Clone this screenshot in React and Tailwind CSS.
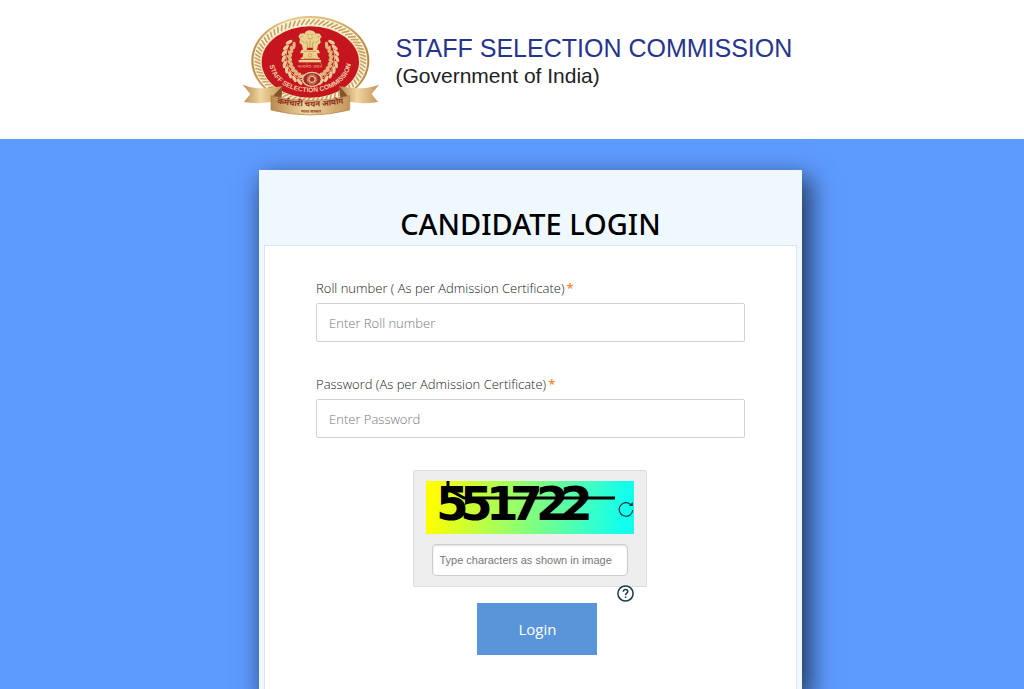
import { useState } from "react";

const CAPTCHA_CODE = "551722";

const range = (count) => Array.from({ length: count }, (_, i) => i);

function Laurel() {
	return (
		<g>
			<path d="M207 219 C160 205 138 165 157 112" fill="none" stroke="#e3c08a" strokeWidth="3" />
			{range(9).map((i) => {
				const angle = 110 + i * 13;
				const rad = (angle * Math.PI) / 180;
				const x = 222 + 70 * Math.cos(rad);
				const y = 150 + 69 * Math.sin(rad);
				return (
					<g key={i} transform={`translate(${x} ${y}) rotate(${angle + 90})`}>
						<ellipse cx="0" cy="-10" rx="11" ry="5" fill="#eacb98" transform="rotate(28)" />
						<ellipse cx="0" cy="10" rx="11" ry="5" fill="#dfb67b" transform="rotate(-28)" />
					</g>
				);
			})}
		</g>
	);
}

function Emblem() {
	return (
		<svg className="h-[115px] w-[150px] shrink-0" viewBox="0 0 450 345" role="img" aria-label="Staff Selection Commission emblem">
			<defs>
				<linearGradient id="gold" x1="0" x2="1">
					<stop offset="0" stopColor="#b98a45" />
					<stop offset=".3" stopColor="#e9cd8c" />
					<stop offset=".7" stopColor="#dbb76e" />
					<stop offset="1" stopColor="#b78339" />
				</linearGradient>
				<linearGradient id="ribbon" x1="0" x2="1">
					<stop offset="0" stopColor="#b88a50" />
					<stop offset=".45" stopColor="#f0d6a0" />
					<stop offset="1" stopColor="#c4965a" />
				</linearGradient>
				<path id="nameArc" d="M100 165 C112 282 332 282 346 162" />
				<path id="ribbonArc" d="M116 284 Q222 308 330 284" />
				<path id="mottoArc" d="M150 309 Q222 320 300 309" />
			</defs>
			<ellipse cx="223" cy="158" rx="177" ry="134" fill="url(#gold)" />
			<ellipse cx="223" cy="158" rx="171" ry="128" fill="#faf3df" />
			<g stroke="#c9a25c" strokeWidth="5" strokeLinecap="round">
				{range(72).map((i) => {
					const a = (i * 5 * Math.PI) / 180;
					const b = a + 0.07;
					return (
						<line
							key={i}
							x1={223 + 150 * Math.cos(a)}
							y1={158 + 110 * Math.sin(a)}
							x2={223 + 166 * Math.cos(b)}
							y2={158 + 123 * Math.sin(b)}
						/>
					);
				})}
			</g>
			<ellipse cx="223" cy="161" rx="150" ry="109" fill="#f4e4b9" />
			<ellipse cx="223" cy="162" rx="146" ry="107" fill="#c5161f" />
			<Laurel />
			<g transform="translate(446 0) scale(-1 1)">
				<Laurel />
			</g>
			<g fill="#ecd08e">
				<path d="M204 80 Q208 67 222 67 Q237 68 240 80 L243 91 L239 101 L237 119 H207 L205 101 L201 90 Z" />
				<path d="M204 76 L192 77 L187 86 L192 93 L190 104 L198 111 L201 127 L213 127 L211 89 Z" />
				<path d="M240 76 L251 77 L257 86 L252 93 L254 104 L246 111 L243 127 L231 127 L233 89 Z" />
				<path d="M196 126 H248 L252 136 H243 L247 149 H251 V154 H194 V149 H199 L202 136 H192 Z" />
				<path d="M188 156 H255 V163 H188 Z" />
			</g>
			<g fill="none" stroke="#b98d45" strokeWidth="2">
				<path d="M213 79 Q218 84 219 78 M225 78 Q227 84 232 79 M214 89 Q222 98 231 89 M210 99 L215 109 L213 123 M234 99 L229 109 L231 123 M222 97 V119 M193 86 H200 M244 86 H251 M197 98 L206 105 M247 98 L239 105" />
				<circle cx="222" cy="142" r="5" />
				<path d="M204 130 H241 M204 151 H241" />
			</g>
			<text x="222" y="181" textAnchor="middle" fontSize="15" fill="#e6a070" fontFamily="Noto Sans, sans-serif">सत्यमेव जयते</text>
			<ellipse cx="228" cy="214" rx="31" ry="23" fill="#e8c894" />
			<ellipse cx="228" cy="214" rx="26" ry="19" fill="#9f2a25" />
			<g stroke="#dcb27e" strokeWidth="2">
				{range(12).map((i) => (
					<line key={i} x1="228" y1="198" x2="228" y2="230" transform={`rotate(${i * 15} 228 214)`} />
				))}
			</g>
			<circle cx="228" cy="214" r="9" fill="#a83428" stroke="#e8c894" strokeWidth="3" />
			<text fontSize="20" fontWeight="700" fill="#f0cfa8" fontFamily="Liberation Sans, sans-serif">
				<textPath href="#nameArc" startOffset="50%" textAnchor="middle">STAFF SELECTION COMMISSION</textPath>
			</text>
			<path d="M20 230 Q70 250 139 234 L132 277 Q80 291 24 282 L43 258 Z" fill="url(#ribbon)" />
			<path d="M429 230 Q376 250 310 234 L316 277 Q366 291 426 282 L407 258 Z" fill="url(#ribbon)" />
			<path d="M105 271 L139 234 L136 278 Z M341 271 L310 234 L313 278 Z" fill="#875428" />
			<path d="M105 263 Q222 292 341 263 V306 Q222 336 105 306 Z" fill="url(#ribbon)" stroke="#af7d42" strokeWidth="2" />
			<text fontSize="24" fontWeight="700" fill="#8d2e1a" fontFamily="Noto Sans, sans-serif">
				<textPath href="#ribbonArc" startOffset="50%" textAnchor="middle">कर्मचारी चयन आयोग</textPath>
			</text>
			<text fontSize="12" fontWeight="700" fill="#8d3a20" fontFamily="Noto Sans, sans-serif">
				<textPath href="#mottoArc" startOffset="50%" textAnchor="middle">भारत सरकार</textPath>
			</text>
		</svg>
	);
}

function CaptchaImage() {
	return (
		<svg className="block h-[53px] w-full overflow-visible" viewBox="0 0 208 53" role="img" aria-label="Captcha">
			<defs>
				<linearGradient id="captchaBg" gradientUnits="userSpaceOnUse" x1="8" y1="0" x2="198" y2="30">
					<stop offset="0" stopColor="#ffff00" />
					<stop offset="1" stopColor="#12ffee" />
				</linearGradient>
			</defs>
			<rect width="208" height="53" fill="url(#captchaBg)" />
			<text x="10 34 60 84 110 134" y="39" fontSize="47" fontWeight="700" fontFamily="DejaVu Sans, sans-serif">
				{CAPTCHA_CODE}
			</text>
			<path d="M22 0 V8 L38 17 H189" fill="none" stroke="#000" strokeWidth="3" />
		</svg>
	);
}

function Field({ id, label, type = "text", placeholder, value, onChange }) {
	return (
		<div>
			<label htmlFor={id} className="block text-[13px] leading-5 font-light text-[#222]">
				{label}
				<span className="ml-0.5 font-semibold text-[#f58634]">*</span>
			</label>
			<input
				id={id}
				type={type}
				placeholder={placeholder}
				value={value}
				onChange={(e) => onChange(e.target.value)}
				className="mt-[5px] block h-[39px] w-full rounded-xs border border-[#d2d2d2] bg-white px-3 text-[13px] font-light text-[#333] placeholder:text-[#777]"
			/>
		</div>
	);
}

export default function App() {
	const [rollNumber, setRollNumber] = useState("");
	const [password, setPassword] = useState("");
	const [captcha, setCaptcha] = useState("");

	return (
		<div className="flex min-h-screen flex-col bg-[#5e9bff] font-['Open_Sans',sans-serif]">
			<header className="flex bg-white pt-2 pb-4 pl-[23%]">
				<Emblem />
				<div className="pt-6 pl-2.5 font-['Liberation_Sans',Arial,sans-serif]">
					<p className="text-[25px] leading-8 whitespace-nowrap text-[#27348b]">STAFF SELECTION COMMISSION</p>
					<p className="text-[21px] leading-6 text-[#222]">(Government of India)</p>
				</div>
			</header>

			<main className="flex grow flex-col pt-[31px]">
				<section className="ml-[25.3%] flex w-[53%] grow flex-col bg-[#f0f8ff] px-[5px] shadow-[6px_10px_24px_2px_rgba(0,0,0,0.65)]">
					<h1 className="pt-[34px] pb-px text-center font-['Noto_Sans','Open_Sans',sans-serif] text-[29px] leading-10 font-medium text-black">
						CANDIDATE LOGIN
					</h1>
					<form className="grow border border-b-0 border-[#dde4eb] bg-white px-[51px] pt-8" onSubmit={(e) => e.preventDefault()}>
						<div className="flex flex-col gap-8">
							<Field
								id="roll"
								label="Roll number ( As per Admission Certificate)"
								placeholder="Enter Roll number"
								value={rollNumber}
								onChange={setRollNumber}
							/>
							<Field
								id="password"
								type="password"
								label="Password (As per Admission Certificate)"
								placeholder="Enter Password"
								value={password}
								onChange={setPassword}
							/>
						</div>

						<div className="relative mx-auto mt-8 w-[234px] rounded-xs border border-[#ddd] bg-[#eee] py-2.5 pr-3 pl-3">
							<CaptchaImage />
							<button type="button" aria-label="Refresh captcha" className="absolute top-[30px] right-3 text-[#12343b]">
								<svg className="size-4" viewBox="0 0 16 16" fill="none" stroke="currentColor" strokeWidth="1.2">
									<path d="M13.2 4 A6.8 6.8 0 1 0 14.8 9" />
									<path d="M14.8 1 V5 H10.8 Z" fill="currentColor" stroke="none" />
								</svg>
							</button>
							<input
								aria-label="Captcha characters"
								placeholder="Type characters as shown in image"
								value={captcha}
								onChange={(e) => setCaptcha(e.target.value)}
								className="mx-auto mt-2.5 block h-8 w-[196px] rounded-sm border border-[#ccc] bg-white px-1.5 font-['Liberation_Sans',Arial,sans-serif] text-[11px] shadow-[inset_0_1px_2px_rgba(0,0,0,0.12)] placeholder:text-[#777]"
							/>
							<button type="button" aria-label="Help" className="absolute right-3 -bottom-4 text-[#183d48]">
								<svg className="size-[17px]" viewBox="0 0 17 17" fill="none" stroke="currentColor" strokeWidth="1.5">
									<circle cx="8.5" cy="8.5" r="7.6" />
									<path d="M6.3 6.7 C6.3 3.8 10.8 3.9 10.8 6.6 C10.8 8.2 8.6 8.2 8.6 10.2 M8.6 11.4 V12.9" />
								</svg>
							</button>
						</div>

						<div className="mt-4 flex justify-center pl-3.5">
							<button type="submit" className="h-[52px] w-[120px] bg-[#5995d8] text-[15px] text-white">
								Login
							</button>
						</div>
					</form>
				</section>
			</main>
		</div>
	);
}
